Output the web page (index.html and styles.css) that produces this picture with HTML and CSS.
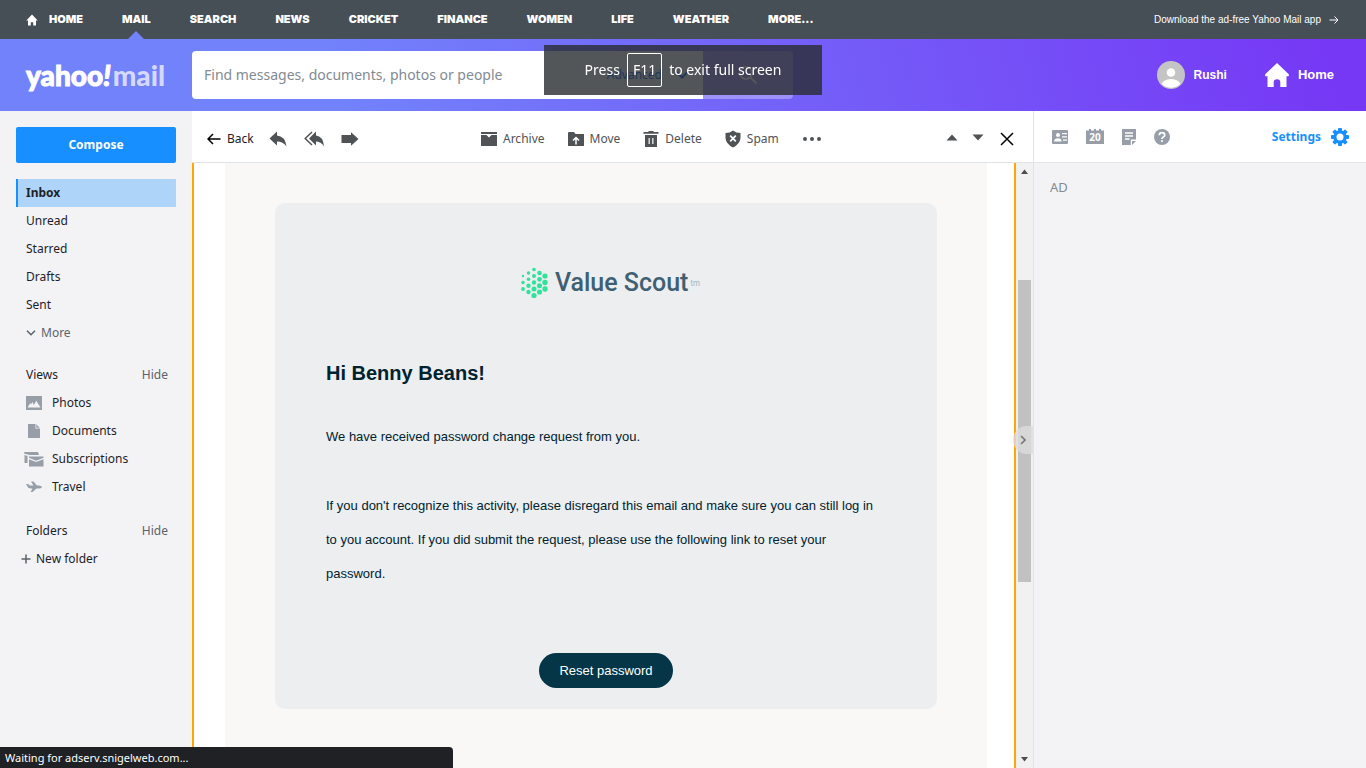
FILE: index.html
```html
<!DOCTYPE html>
<html lang="en">
<head>
<meta charset="utf-8">
<title>Yahoo Mail</title>
<link rel="stylesheet" href="styles.css">
</head>
<body>
<div class="page">
  <nav class="topnav">
    <a class="home" href="#"><svg width="12" height="12" viewBox="0 0 12 12"><path fill="#fff" d="M6 0.5 0.3 6.4H2V11.5H4.8V8.2H7.2V11.5H10V6.4H11.7Z"/></svg>HOME</a>
    <a class="current" href="#">MAIL</a>
    <a href="#">SEARCH</a>
    <a href="#">NEWS</a>
    <a href="#">CRICKET</a>
    <a href="#">FINANCE</a>
    <a href="#">WOMEN</a>
    <a href="#">LIFE</a>
    <a href="#">WEATHER</a>
    <a href="#">MORE...</a>
    <a class="download" href="#">Download the ad-free Yahoo Mail app <svg width="10" height="10" viewBox="0 0 10 10"><path fill="none" stroke="#fff" d="M0.5 5H9M5.5 1.5 9 5 5.5 8.5"/></svg></a>
  </nav>

  <header class="header">
    <a class="logo" href="#"><b>yahoo<i>!</i></b><span>mail</span></a>
    <form class="search">
      <div class="search-field">
        <input type="text" aria-label="Search mail" placeholder="Find messages, documents, photos or people">
        <button class="advanced" type="button">Advanced <svg width="12" height="8" viewBox="0 0 12 8"><path fill="none" stroke="#0063eb" stroke-width="2" d="M1 1.5 6 6.500 11 1.500"/></svg></button>
      </div>
      <button class="search-go" type="button" aria-label="Search"><svg width="20" height="20" viewBox="0 0 20 20"><g fill="none" stroke="#fff" stroke-width="2"><circle cx="8" cy="8" r="6"/><path d="M12.500 12.500 18.500 18.500"/></g></svg></button>
    </form>
    <div class="account">
      <a class="user" href="#"><svg width="28" height="28" viewBox="0 0 28 28"><clipPath id="face"><circle cx="14" cy="14" r="12.800"/></clipPath><circle cx="14" cy="14" r="14" fill="#c4c4c4"/><g fill="#fff" clip-path="url(#face)"><circle cx="14" cy="11.500" r="4.300"/><ellipse cx="14" cy="24" rx="9.500" ry="6"/></g></svg>Rushi</a>
      <a href="#"><svg width="24" height="24" viewBox="0 0 24 24"><path fill="#fff" d="M12 0 0.200 11.200V13.200H2.500V24H8.700V19.500A3.300 3.300 0 0 1 15.300 19.500V24H21.500V13.200H23.800V11.200Z"/></svg>Home</a>
    </div>
  </header>

  <div class="body">
    <aside class="sidebar">
      <button class="compose" type="button">Compose</button>
      <ul class="folders">
        <li><a class="selected" href="#">Inbox</a></li>
        <li><a href="#">Unread</a></li>
        <li><a href="#">Starred</a></li>
        <li><a href="#">Drafts</a></li>
        <li><a href="#">Sent</a></li>
      </ul>
      <button class="more" type="button"><svg width="10" height="6" viewBox="0 0 10 6"><path fill="none" stroke="#5b636a" stroke-width="1.600" d="M1 0.800 5 4.700 9 0.800"/></svg>More</button>
      <div class="section"><span>Views</span><button type="button">Hide</button></div>
      <ul class="views">
        <li><a href="#"><svg width="16" height="14" viewBox="0 0 16 14"><path fill="#979ea8" fill-rule="evenodd" d="M0 0H16V14H0ZM1.500 11.500H14.500L10.300 4.800 7.800 9 6.500 6 4.800 8.500 4.300 7Z"/></svg>Photos</a></li>
        <li><a href="#"><svg width="16" height="14" viewBox="0 0 16 14"><path fill="#979ea8" d="M2 0H9.500V4.500H14V14H2ZM10.300 0.300 13.700 3.700H10.300Z"/></svg>Documents</a></li>
        <li><a href="#"><svg class="wide" width="20" height="16" viewBox="0 0 20 16"><path fill="#979ea8" d="M0 1.500Q0 1 1 1H14L15 4H5.500L0 2.600ZM0.500 4 3.500 5V12H0.500ZM5 5.500H19.500V6.800L12.200 9.700 5 6.800ZM5 8.200 12.200 11 19.500 8.200V15.500H5Z"/></svg>Subscriptions</a></li>
        <li><a href="#"><svg width="16" height="14" viewBox="0 0 16 14"><path fill="#979ea8" d="M0 4H2L3.800 5.500H7.500L5 1.500H7.500L11 5.500H13.500Q16 6 16 7Q15.500 8.500 12.500 8.500H10.500L6.500 12H4.500L6.500 8.800 2.500 8Z"/></svg>Travel</a></li>
      </ul>
      <div class="section"><span>Folders</span><button type="button">Hide</button></div>
      <button class="new-folder" type="button"><svg width="10" height="10" viewBox="0 0 10 10"><path stroke="#5b636a" stroke-width="1.500" d="M0.500 5H9.500M5 0.500V9.500"/></svg>New folder</button>
    </aside>

    <main class="main">
      <div class="toolbar">
        <div class="tools-left">
          <button class="back" type="button"><svg width="14" height="12" viewBox="0 0 14 12"><path fill="none" stroke="#000" stroke-width="1.500" d="M1 6H13.500M6 1 1 6 6 11"/></svg>Back</button>
          <button type="button" aria-label="Reply"><svg width="18" height="16" viewBox="0 0 18 16"><path fill="#4f5356" d="M8 0.500V4.500Q16 5 17.500 15.500Q14 10.500 8 10.500V14.500L0.500 7.500Z"/></svg></button>
          <button type="button" aria-label="Reply all"><svg width="20" height="16" viewBox="0 0 20 16"><path fill="#4f5356" d="M12 0.500V4.500Q19 5 20 15.500Q17 10.500 12 10.500V14.500L5 7.500Z"/><path fill="none" stroke="#4f5356" stroke-width="1.500" d="M8 1 1.200 7.500 8 14"/></svg></button>
          <button type="button" aria-label="Forward"><svg width="18" height="14" viewBox="0 0 18 14"><path fill="#4f5356" d="M0.500 3H10V0.300L17.500 7 10 13.700V11H0.500Z"/></svg></button>
        </div>
        <div class="tools-mid">
          <button type="button"><svg width="16" height="14" viewBox="0 0 16 14"><path fill="#4f5356" d="M0 0H16V2H0ZM0 3H5.500L8 5.500 10.500 3H16V14H0Z"/></svg>Archive</button>
          <button type="button"><svg width="16" height="14" viewBox="0 0 16 14"><path fill="#4f5356" d="M0 1Q0 0 1 0H6L7.500 2H16V14H0Z"/><path fill="none" stroke="#fff" stroke-width="1.500" d="M8 12.500V5.500M5 8.500 8 5.500 11 8.500"/></svg>Move</button>
          <button type="button"><svg width="16" height="16" viewBox="0 0 16 16"><path fill="#4f5356" d="M0.500 1H5.500V0H10.500V1H15.500V2.800H0.500ZM2 4H14V16H2Z"/><path stroke="#d8dadb" stroke-width="1.500" d="M6.200 7V13M9.800 7V13"/></svg>Delete</button>
          <button type="button"><svg width="16" height="18" viewBox="0 0 16 18"><path fill="#4f5356" d="M8 0.500Q11 3 15.500 3V8Q15 14 8 17.500Q1 14 0.500 8V3Q5 3 8 0.500Z"/><path stroke="#fff" stroke-width="1.700" d="M5.200 5.700 10.800 11.300M10.800 5.700 5.200 11.300"/></svg>Spam</button>
          <button type="button" aria-label="More actions"><svg width="20" height="4" viewBox="0 0 20 4"><g fill="#4f5356"><circle cx="3" cy="2" r="2"/><circle cx="10" cy="2" r="2"/><circle cx="17" cy="2" r="2"/></g></svg></button>
        </div>
        <div class="tools-right">
          <button type="button" aria-label="Previous"><svg width="12" height="16" viewBox="0 0 12 16"><path fill="#4f5356" d="M6 3.500 11.500 9.500H0.500Z"/></svg></button>
          <button type="button" aria-label="Next"><svg width="12" height="16" viewBox="0 0 12 16"><path fill="#4f5356" d="M6 9.500 11.500 3.500H0.500Z"/></svg></button>
          <button type="button" aria-label="Close"><svg width="14" height="14" viewBox="0 0 14 14"><path stroke="#000" stroke-width="1.500" d="M1 1 13 13M13 1 1 13"/></svg></button>
        </div>
      </div>

      <div class="reader">
        <div class="message">
          <div class="canvas">
            <article class="card">
              <div class="brand">
                <svg width="28" height="32" viewBox="0 0 28 32"><g fill="#2fe39b"><circle cx="3" cy="9" r="1.200"/><circle cx="3" cy="15.500" r="1.700"/><circle cx="3" cy="22" r="1.900"/><circle cx="8.500" cy="6" r="1.700"/><circle cx="8.500" cy="12.300" r="1.800"/><circle cx="8.500" cy="18.700" r="2.200"/><circle cx="8.500" cy="25" r="2.200"/><circle cx="14" cy="2.500" r="1.800"/><circle cx="14" cy="9" r="2"/><circle cx="14" cy="15.500" r="2.200"/><circle cx="14" cy="22" r="2.500"/><circle cx="14" cy="28.500" r="2.600"/><circle cx="19.500" cy="6" r="2.300"/><circle cx="19.500" cy="12.300" r="2.400"/><circle cx="19.500" cy="18.700" r="2.500"/><circle cx="19.500" cy="25" r="2.600"/><circle cx="25" cy="9" r="2.600"/><circle cx="25" cy="15.500" r="2.700"/><circle cx="25" cy="22" r="2.700"/></g></svg>
                <strong>Value Scout</strong><small>tm</small>
              </div>
              <h1>Hi Benny Beans!</h1>
              <p>We have received password change request from you.</p>
              <p>If you don't recognize this activity, please disregard this email and make sure you can still log in to you account. If you did submit the request, please use the following link to reset your password.</p>
              <a class="reset" href="#">Reset password</a>
            </article>
          </div>
        </div>
        <div class="scrollbar">
          <svg width="15" height="16" viewBox="0 0 15 16"><path fill="#4d4d4d" d="M7.500 6.500 11 11H4Z"/></svg>
          <div class="track"><div class="thumb"></div></div>
          <svg width="15" height="16" viewBox="0 0 15 16"><path fill="#4d4d4d" d="M7.500 9.500 11 5H4Z"/></svg>
        </div>
        <button class="collapse" type="button" aria-label="Hide panel"><svg width="6" height="10" viewBox="0 0 6 10"><path fill="none" stroke="#777" stroke-width="1.600" d="M1 1 5 5 1 9"/></svg></button>
      </div>
    </main>

    <aside class="panel">
      <div class="panel-bar">
        <button type="button" aria-label="Contacts"><svg width="16" height="14" viewBox="0 0 16 14"><rect width="16" height="14" rx="1" fill="#979ea8"/><circle cx="6" cy="5" r="2" fill="#fff"/><path fill="#fff" d="M2 11.500Q2.300 8.200 6 8.200T9.500 11.500ZM10 3H15V4.300H10ZM10 6.200H15V7.500H10ZM11 9.400H15V10.700H11Z"/></svg></button>
        <button class="calendar" type="button" aria-label="Calendar"><svg width="18" height="16" viewBox="0 0 18 16"><path fill="#979ea8" d="M0 1.500H3V0H5V1.500H8V0H10V1.500H13V0H15V1.500H18V15H0Z"/><text x="9" y="12">20</text></svg></button>
        <button type="button" aria-label="Notepad"><svg width="14" height="16" viewBox="0 0 14 16"><path fill="#979ea8" d="M0 0H14V10.500H8.800V16H0ZM10 12H14L10 16Z"/><path stroke="#fff" stroke-width="1.500" d="M3 4H11M3 7H11M3 10H7.500"/></svg></button>
        <button type="button" aria-label="Help"><svg width="16" height="16" viewBox="0 0 16 16"><circle cx="8" cy="8" r="8" fill="#979ea8"/><path fill="none" stroke="#fff" stroke-width="1.700" d="M5.300 6.200C5.300 2.800 10.700 2.800 10.700 6.200C10.700 8 8 7.800 8 10"/><circle cx="8" cy="12" r="1.100" fill="#fff"/></svg></button>
        <a class="settings" href="#">Settings <svg width="18" height="18" viewBox="-9 -9 18 18"><g fill="#188fff"><g id="tooth"><rect x="-2" y="-9" width="4" height="18" rx="1"/><rect x="-9" y="-2" width="18" height="4" rx="1"/></g><use href="#tooth" transform="rotate(45)"/><circle r="6.700"/></g><circle r="3.500" fill="#fff"/></svg></a>
      </div>
      <div class="ad">AD</div>
    </aside>
  </div>
</div>

<div class="fullscreen-hint">Press <kbd>F11</kbd> to exit full screen</div>
<div class="status">Waiting for adserv.snigelweb.com...</div>
</body>
</html>
```
FILE: styles.css
```css
* { box-sizing: border-box; }
body { margin: 0; font: 12px/20px "Noto Sans", "Open Sans", sans-serif; color: #1d2228; }
a { color: inherit; text-decoration: none; }
button { margin: 0; padding: 0; border: 0; background: none; color: inherit; font: inherit; cursor: pointer; }
ul { margin: 0; padding: 0; list-style: none; }
svg { display: block; flex: none; }

.page { display: flex; flex-direction: column; height: 100vh; overflow: hidden; }

.topnav { display: flex; align-items: center; gap: 39px; height: 39px; flex: none; padding: 0 27px 0 26px; background: #464e56; color: #fff; font: 900 11px/39px Inter, sans-serif; }
.home { display: flex; align-items: center; gap: 11px; }
.current { position: relative; }
.current::after { content: ""; position: absolute; left: 50%; bottom: 0; margin-left: -8px; border: 8px solid transparent; border-top: 0; border-bottom-color: #7282fa; }
.download { display: flex; align-items: center; gap: 8px; margin-left: auto; font: 10px/39px "Liberation Sans", sans-serif; }

.header { display: flex; align-items: center; height: 72px; flex: none; padding-right: 32px; background: linear-gradient(75deg, #7282fb 25%, #7638f5 97%); color: #fff; }
.logo { width: 192px; flex: none; padding-left: 26px; font: 900 28px/36px Lato, sans-serif; }
.logo b { font-weight: 900; -webkit-text-stroke: 1px; }
.logo span { margin-left: 2px; color: #d5d9fe; }
.search { display: flex; flex: 0 1 601px; height: 48px; }
.search-field { display: flex; flex: 1; min-width: 0; background: #fff; border-radius: 4px 0 0 4px; }
.search-field input { flex: 1; min-width: 0; padding: 0 12px; border: 0; background: none; font: 14px/24px "Noto Sans", "Open Sans", sans-serif; }
.search-field input::placeholder { color: #828a93; }
.advanced { display: flex; align-items: center; gap: 14px; padding-right: 15px; color: #0063eb; }
.search-go { display: flex; align-items: center; justify-content: center; width: 90px; background: rgba(255,255,255,.3); border-radius: 0 4px 4px 0; }
.account { display: flex; align-items: center; gap: 38px; margin-left: auto; font: bold 13px/20px "Liberation Sans", sans-serif; }
.account a { display: flex; align-items: center; gap: 9px; }
.account .user { font-size: 12px; }

.body { display: flex; flex: 1; min-height: 0; }

.sidebar { width: 192px; flex: none; padding: 16px; background: #f3f3f6; }
.compose { display: block; width: 100%; height: 36px; margin-bottom: 16px; border-radius: 2px; background: #188fff; color: #fff; font-weight: 700; }
.folders a { display: block; padding-left: 10px; line-height: 28px; }
.folders .selected { padding-left: 8px; border-left: 2px solid #188fff; background: #aed4f9; font-weight: 700; }
.more { display: flex; align-items: center; gap: 5px; height: 28px; margin-bottom: 14px; padding-left: 10px; color: #5b636a; }
.section { display: flex; justify-content: space-between; padding: 0 8px 0 10px; line-height: 28px; }
.section button { color: #5b636a; }
.views { margin-bottom: 16px; }
.views a { display: flex; align-items: center; gap: 10px; height: 28px; padding-left: 10px; }
.views .wide { margin: 0 -2px; }
.new-folder { display: flex; align-items: center; gap: 5px; height: 28px; padding-left: 5px; }

.main { display: flex; flex-direction: column; flex: 1; min-width: 0; background: #fff; }
.toolbar { display: flex; align-items: center; justify-content: space-between; height: 52px; flex: none; padding: 4px 19px 0 15px; border-bottom: 1px solid #e0e4e9; }
.toolbar div, .toolbar button { display: flex; align-items: center; }
.toolbar button { gap: 6px; color: #4f5356; }
.tools-left { gap: 17px; }
.tools-left .back { margin-right: -2px; color: #1d2228; }
.tools-mid { gap: 23px; }
.tools-right { gap: 12px; }
.tools-right :last-child { margin-left: 2px; }

.reader { position: relative; display: flex; flex: 1; min-height: 0; }
.message { flex: 1; min-width: 0; overflow: hidden; padding: 0 27px 0 31px; border: solid #ffa700; border-width: 0 2px; }
.canvas { height: 100%; padding: 40px 50px; background: #f9f8f7; }
.card { display: flex; flex-direction: column; padding: 63px 51px 21px; border-radius: 10px; background: #eceef0; color: #00232f; font: 13px/34px "Liberation Sans", sans-serif; }
.brand { display: flex; align-items: center; align-self: center; height: 34px; margin-left: 8px; color: #3f6072; }
.brand strong { margin-left: 7px; font: 500 25px/34px Roboto, sans-serif; }
.brand small { margin-left: 2px; color: #a5b3bb; font: 8px/24px Inter, sans-serif; }
.card h1 { margin: 56px 0 30px; font-size: 20px; line-height: 34px; }
.card p { max-width: 560px; margin: 0 0 35px; }
.card .reset { align-self: center; margin: 27px 0 0; padding: 0 20px; border-radius: 18px; background: #053648; color: #fff; line-height: 35px; }

.scrollbar { display: flex; flex-direction: column; align-items: center; width: 17px; flex: none; background: #f1f1f1; }
.track { flex: 1; width: 13px; padding-top: 101px; }
.thumb { height: 64%; background: #c1c1c1; }
.collapse { position: absolute; right: 0; top: 263px; display: flex; align-items: center; justify-content: center; width: 20px; height: 28px; border-radius: 14px 0 0 14px; background: rgba(220,220,220,.8); }

.panel { width: 333px; flex: none; border-left: 1px solid #e0e4e9; background: #f3f3f6; }
.panel-bar { display: flex; align-items: center; gap: 18px; height: 52px; padding: 0 17px 0 18px; border-bottom: 1px solid #e0e4e9; background: #fff; }
.calendar text { fill: #fff; font: bold 10px "Noto Sans", sans-serif; text-anchor: middle; }
.settings { display: flex; align-items: center; gap: 10px; margin-left: auto; color: #188fff; font-weight: 700; }
.ad { padding: 14px 16px; color: #828a93; font-size: 13px; }

.fullscreen-hint { position: fixed; top: 45px; left: 50%; display: flex; align-items: center; justify-content: center; gap: 7px; width: 278px; height: 50px; margin-left: -139px; background: rgba(40,44,47,.8); color: #fff; font-size: 14px; }
.fullscreen-hint kbd { padding: 0 5px; border: 1px solid #fff; border-radius: 2px; font: inherit; line-height: 32px; }
.status { position: fixed; left: 0; bottom: 0; width: 453px; padding-left: 5px; border-radius: 0 4px 0 0; background: #202124; color: #fff; font-size: 11px; line-height: 21px; }
```
